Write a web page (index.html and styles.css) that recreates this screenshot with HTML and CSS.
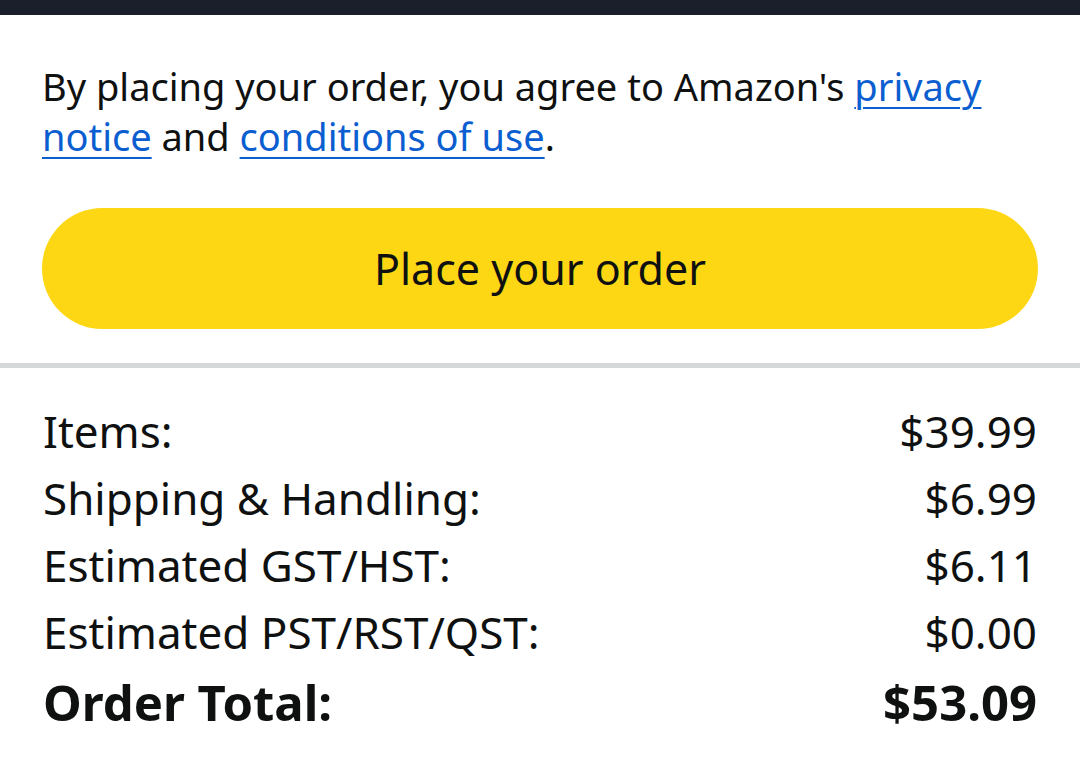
FILE: index.html
```html
<!DOCTYPE html>
<html lang="en">
<head>
    <meta charset="UTF-8" />
    <meta name="viewport" content="width=device-width, initial-scale=1.0" />
    <title>Place your order</title>
    <link rel="stylesheet" href="styles.css">
</head>
<body>
    <div class="status-bar"></div>

    <div class="place-order">
        <p class="agree-text">
            By placing your order, you agree to Amazon's <a href="#">privacy notice</a>
            and <a href="#">conditions of use</a>.
        </p>
        <button type="button" class="btn-place">Place your order</button>
    </div>

    <div class="summary">
        <div class="summary-row">
            <span>Items:</span>
            <span>$39.99</span>
        </div>
        <div class="summary-row">
            <span>Shipping &amp; Handling:</span>
            <span>$6.99</span>
        </div>
        <div class="summary-row">
            <span>Estimated GST/HST:</span>
            <span>$6.11</span>
        </div>
        <div class="summary-row">
            <span>Estimated PST/RST/QST:</span>
            <span>$0.00</span>
        </div>
        <div class="summary-row total">
            <span>Order Total:</span>
            <span>$53.09</span>
        </div>
    </div>
</body>
</html>
```

FILE: styles.css
```css
body {
    font-family: "Noto Sans", "Open Sans", sans-serif;
    margin: 0;
    background-color: #fff;
    color: #0f1111;
}

.status-bar {
    height: 15px;
    background-color: #1b1f2b;
}

.place-order {
    padding: 46px 42px 34px;
    border-bottom: 5px solid #d5d9d9;
}

.agree-text {
    margin: 0 0 47px;
    font-size: 38px;
    line-height: 50px;
}

.agree-text a {
    color: #0b5ed0;
    text-decoration: underline;
    text-underline-offset: 6px;
    text-decoration-thickness: 2px;
}

.btn-place {
    display: block;
    width: 100%;
    height: 121px;
    border: none;
    border-radius: 61px;
    background-color: #fed714;
    color: #0f1111;
    font-family: inherit;
    font-size: 43px;
    cursor: pointer;
}

.summary {
    padding: 30px 43px 0;
}

.summary-row {
    display: flex;
    justify-content: space-between;
    font-size: 44px;
    line-height: 67px;
}

.summary-row.total {
    font-weight: bold;
    font-size: 49px;
    line-height: 72px;
}
```
